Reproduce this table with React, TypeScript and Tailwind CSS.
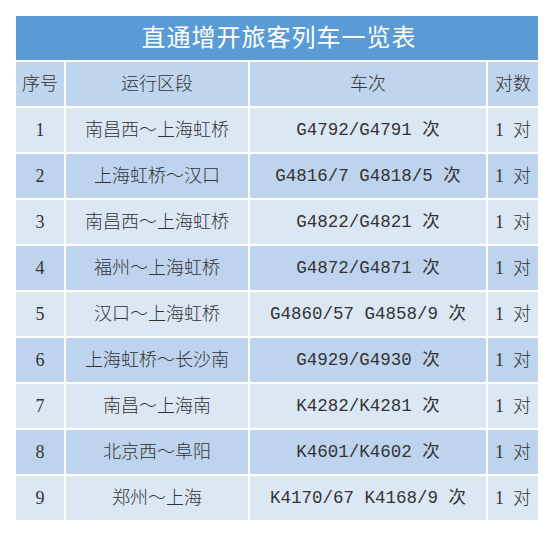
import React from 'react'

type Row = { no: string; route: string; train: string; pairs: string }

const rows: Row[] = [
  { no: '1', route: '南昌西～上海虹桥', train: 'G4792/G4791 次', pairs: '1 对' },
  { no: '2', route: '上海虹桥～汉口', train: 'G4816/7 G4818/5 次', pairs: '1 对' },
  { no: '3', route: '南昌西～上海虹桥', train: 'G4822/G4821 次', pairs: '1 对' },
  { no: '4', route: '福州～上海虹桥', train: 'G4872/G4871 次', pairs: '1 对' },
  { no: '5', route: '汉口～上海虹桥', train: 'G4860/57 G4858/9 次', pairs: '1 对' },
  { no: '6', route: '上海虹桥～长沙南', train: 'G4929/G4930 次', pairs: '1 对' },
  { no: '7', route: '南昌～上海南', train: 'K4282/K4281 次', pairs: '1 对' },
  { no: '8', route: '北京西～阜阳', train: 'K4601/K4602 次', pairs: '1 对' },
  { no: '9', route: '郑州～上海', train: 'K4170/67 K4168/9 次', pairs: '1 对' },
]

const serif = "font-['Liberation_Serif','Noto_Sans_CJK_SC',serif] font-light"
const mono = "font-['Liberation_Mono','Noto_Sans_CJK_SC',monospace]"

const App = () => {
  return (
    <div className="w-[556px] h-[539px] bg-white pt-4 pl-4">
      <div className="w-[522px] flex flex-col gap-y-[2px]">
        <div className="h-[44px] bg-[#5b9bd5] flex items-center justify-center">
          <p className="font-['Liberation_Serif','Noto_Sans_CJK_SC',serif] text-white text-[24px] tracking-[1px] pl-[4px]">直通增开旅客列车一览表</p>
        </div>
        <div className="grid grid-cols-[48px_182px_236px_50px] gap-x-[2px] h-[44px] text-[#333] text-[18px]">
          <div className={`bg-[#bfd5ee] flex items-center justify-center ${serif}`}>序号</div>
          <div className={`bg-[#bfd5ee] flex items-center justify-center ${serif}`}>运行区段</div>
          <div className={`bg-[#bfd5ee] flex items-center justify-center ${serif}`}>车次</div>
          <div className={`bg-[#bfd5ee] flex items-center justify-center ${serif}`}>对数</div>
        </div>
        {rows.map((r, i) => {
          const bg = i % 2 === 0 ? 'bg-[#dce7f4]' : 'bg-[#bed4ee]'
          return (
            <div key={r.no} className="grid grid-cols-[48px_182px_236px_50px] gap-x-[2px] h-[44px] text-[#333]">
              <div className={`${bg} flex items-center justify-center ${serif} text-[18px]`}>{r.no}</div>
              <div className={`${bg} flex items-center justify-center ${serif} text-[18px]`}>{r.route}</div>
              <div className={`${bg} flex items-center justify-center ${mono} text-[17.5px] whitespace-pre`}>{r.train}</div>
              <div className={`${bg} flex items-center justify-center ${serif} text-[18px] whitespace-pre`}>{r.pairs.replace(' ', '  ')}</div>
            </div>
          )
        })}
      </div>
    </div>
  )
}

export default App
